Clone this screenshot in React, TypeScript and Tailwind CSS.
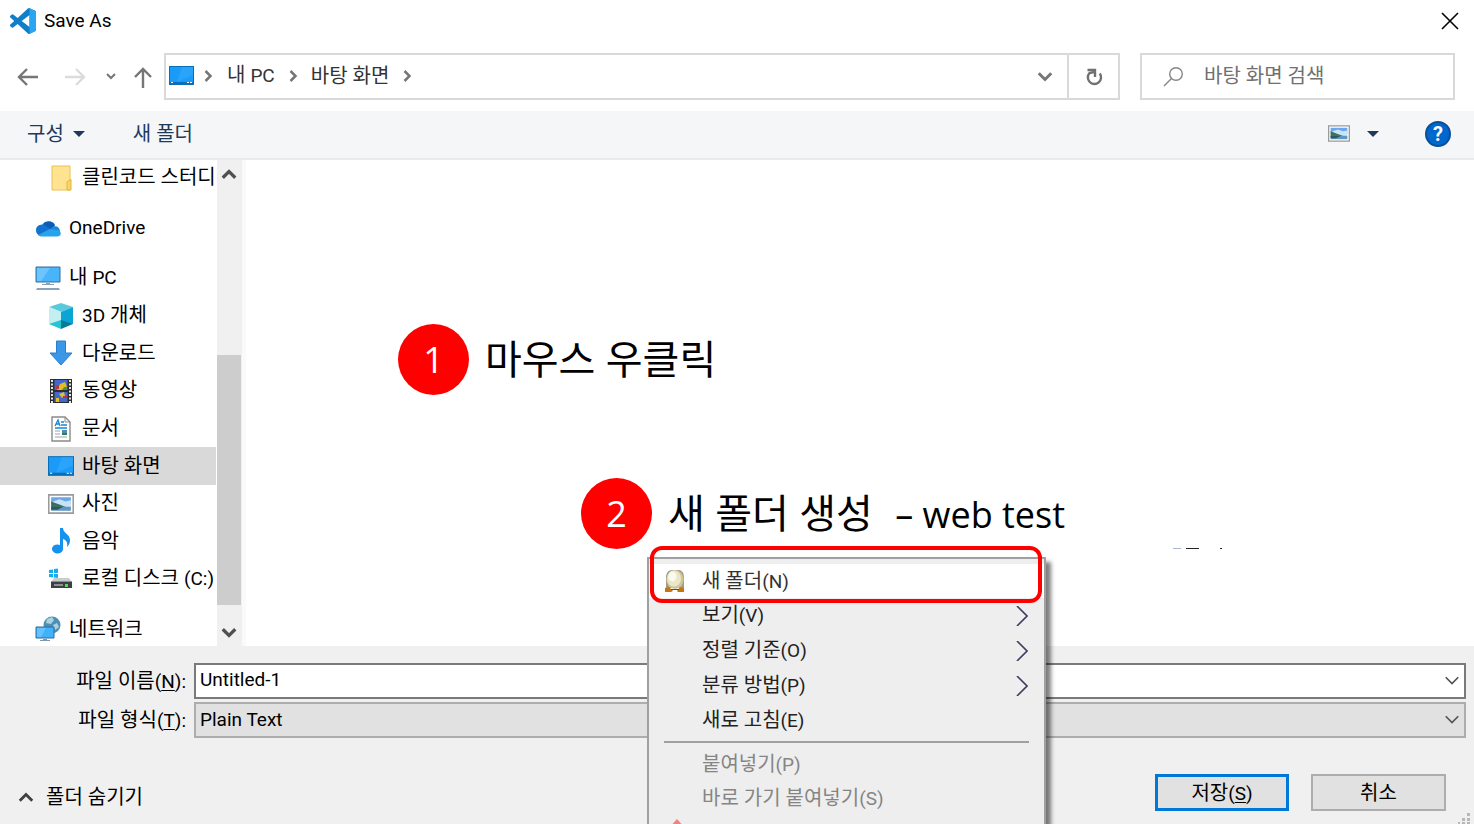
import React from 'react';

type IconProps = { className?: string };

/**
 * Renders a label. Latin runs are set one step smaller than Hangul so both
 * scripts look the same height.
 */
const Label: React.FC<{ text: string }> = ({ text }) => (
    <span className="whitespace-nowrap">
        {text.split(/([\x21-\x7e]+)/).map((part, i) =>
            i % 2 === 1 ? <span key={i} className="text-[19px]">{part}</span> : part
        )}
    </span>
);

const Chevron: React.FC<IconProps & { d?: string; width?: number }> = ({ className, d = 'M3 5l5 5 5-5', width = 2 }) => (
    <svg className={className} viewBox="0 0 16 16" fill="none" stroke="currentColor" strokeWidth={width}>
        <path d={d} />
    </svg>
);

const RIGHT = 'M6 4l4 4-4 4';
const UP = 'M3 11l5-5 5 5';

const VsCodeIcon: React.FC<IconProps> = ({ className }) => (
    <svg className={className} viewBox="0 0 24 24">
        <path fill="#0f7fc9" d="M23.15 2.587L18.21.21a1.494 1.494 0 0 0-1.705.29l-9.46 8.63-4.12-3.128a.999.999 0 0 0-1.276.057L.327 7.261A1 1 0 0 0 .326 8.74L3.899 12 .326 15.26a1 1 0 0 0 .001 1.479L1.65 17.94a.999.999 0 0 0 1.276.057l4.12-3.128 9.46 8.63a1.492 1.492 0 0 0 1.704.29l4.942-2.377A1.5 1.5 0 0 0 24 20.06V3.939a1.5 1.5 0 0 0-.85-1.352zm-5.146 14.861L10.826 12l7.178-5.448v10.896z" />
        <path fill="#29a5f2" d="M23.15 2.587L18.21.21a1.5 1.5 0 0 0-.9-.12c.4.1.7.5.7 1v21.8c0 .5-.3.9-.7 1 .3.06.6 0 .9-.1l4.942-2.377A1.5 1.5 0 0 0 24 20.06V3.939a1.5 1.5 0 0 0-.85-1.352z" />
    </svg>
);

const DesktopIcon: React.FC<IconProps> = ({ className }) => (
    <svg className={className} viewBox="0 0 25 19">
        <path fill="#0b6fb8" d="M0 0h25v19H0z" />
        <path fill="#1a9bf8" d="M1 1h23v15H1z" />
        <path fill="#35aafc" d="M13 1h11v8L8 16z" opacity=".6" />
        <path fill="#fff" d="M2 16h2v1H2zM18 16h2v1h-2zM21 16h2v1h-2z" />
    </svg>
);

const FolderIcon: React.FC<IconProps> = ({ className }) => (
    <svg className={className} viewBox="0 0 26 26">
        <path d="M4 1h18v24H4z" fill="#ffe391" stroke="#e8c252" />
        <path d="M20 16l3-1.500v10.500h-4v-8z" fill="#fbd468" stroke="#e0b63c" />
    </svg>
);

const CloudIcon: React.FC<IconProps> = ({ className }) => (
    <svg className={className} viewBox="0 0 26 26">
        <path fill="#0a5cb8" d="M7 11a7 6.500 0 0 1 13-1l-2 5-8 3z" />
        <path fill="#1173cf" d="M1 15a6 5.500 0 0 1 10-4l7 4-9 6H6a5.500 5.500 0 0 1-5-6z" />
        <path fill="#1a8ae0" d="M16 14c1-4 9-4 9 3l-3 3z" />
        <path fill="#29a4ea" d="M3 20l12-6 9 1.500c3 2 2 6-2 6H6a5 5 0 0 1-3-1.500z" />
    </svg>
);

const PcIcon: React.FC<IconProps> = ({ className }) => (
    <svg className={className} viewBox="0 0 26 26">
        <path d="M1 2h24v15H1z" fill="#48b5fb" stroke="#336f9c" />
        <path d="M2 3h13L6 16H2z" fill="#85d0ff" opacity=".6" />
        <path fill="#8ba3b8" d="M11 18h4v1h4v1H7v-1h4zM2 23h22l1 2H1z" />
    </svg>
);

const CubeIcon: React.FC<IconProps> = ({ className }) => (
    <svg className={className} viewBox="0 0 26 26">
        <path fill="#5ac9dc" d="M13 0l12 4-12 5L1 4z" />
        <path fill="#c4eff0" d="M1 4l12 5v12L1 21z" />
        <path fill="#0ba5d5" d="M25 4L13 9v12l12 0z" />
        <path fill="#26c3d4" d="M1 21l12-4v9z" />
        <path fill="#087c96" d="M25 21l-12-4v9z" />
    </svg>
);

const DownloadIcon: React.FC<IconProps> = ({ className }) => (
    <svg className={className} viewBox="0 0 26 26">
        <path d="M8.500 1h9v12H24L13 25 2 13h6.500z" fill="#3b97e8" stroke="#2b7fca" />
    </svg>
);

const VideoIcon: React.FC<IconProps> = ({ className }) => (
    <svg className={className} viewBox="0 0 26 26">
        <path fill="#2d2d2d" d="M2 1h22v24H2z" />
        <path fill="#4168cf" d="M6.500 2h13v10h-13zM6.500 14h13v10h-13z" />
        <path d="M4 2v23M22 2v23" stroke="#e8e8e8" strokeWidth="2" strokeDasharray="2 1.500" />
        <path fill="#e5bd22" d="M12 6l5-2 2 5-4 3H9zM11 16l5-2 1 4-3 2zM8 20h3v4H8z" />
        <path fill="#b43842" d="M8 7h3v4H8zM15 18h4v2h-4z" />
        <path fill="#3d9a4f" d="M16 9h3v3h-5z" />
    </svg>
);

const DocIcon: React.FC<IconProps> = ({ className }) => (
    <svg className={className} viewBox="0 0 26 26">
        <path d="M4 1h13l5 5v19H4z" fill="#fff" stroke="#8a8a8a" strokeWidth="1.400" />
        <path d="M17 1v5h5" fill="none" stroke="#8a8a8a" />
        <path d="M7 10l3-6 2 6M8 8h4M13 6h3M13 9h6M7 12h12" stroke="#1a86d4" strokeWidth="1.300" fill="none" />
        <path d="M7 15h5M7 18h5M7 21h12" stroke="#9aa4ad" />
        <path fill="#4a8db8" d="M14 14h5v3h-5z" />
        <path fill="#3b7a4a" d="M14 17h5v2h-5z" />
    </svg>
);

const PictureIcon: React.FC<IconProps> = ({ className }) => (
    <svg className={className} viewBox="0 0 25 19">
        <path d="M.75.75h23.500v17.500H.75z" fill="#fff" stroke="#9b9b9b" strokeWidth="1.500" />
        <path fill="#6aa6ee" d="M3 3h19v7H3z" />
        <path fill="#c7e4f7" d="M5 7l6-2 6 2 5-1v6H5z" />
        <path fill="#3e6f5a" d="M3 7l8 3 8 3H3z" />
        <path fill="#5f96c4" d="M3 12h19v4H3z" />
        <path fill="#2d5a58" d="M3 12h12l-6 3H3z" />
    </svg>
);

const MusicIcon: React.FC<IconProps> = ({ className }) => (
    <svg className={className} viewBox="0 0 26 26">
        <path fill="#1591ee" d="M12 0h3c0 5 7 6 7 12 0 3-1 5-3 7 1-5-1-7-4-8v10a5.500 4.500 0 1 1-3-4z" />
    </svg>
);

const DiskIcon: React.FC<IconProps> = ({ className }) => (
    <svg className={className} viewBox="0 0 26 26">
        <path fill="#14aef0" d="M1 4l4-.5V7H1zM6 3l4-.5V7H6zM1 8h4v3.500L1 11zM6 8h4v4l-4-.5z" />
        <path fill="#c9cccf" d="M6 12h15l3 4H3z" />
        <path fill="#3c4043" d="M3 15h21v7H3z" />
        <path fill="#8b9094" d="M3 15h21v1H3zM6 18h9v2H6z" />
        <path fill="#46e04e" d="M17 18h3v3h-3z" />
    </svg>
);

const NetworkIcon: React.FC<IconProps> = ({ className }) => (
    <svg className={className} viewBox="0 0 26 26">
        <circle cx="17" cy="9" r="8.500" fill="#4f8fb3" />
        <path fill="#a9d3e2" d="M12 3l5-2 2 3-3 4-5-1zM18 9l4-2 2 4-4 3z" />
        <path d="M1 11h18v11H1z" fill="#3fb2fb" stroke="#2c6d9e" />
        <path d="M2 12h9l-5 9H2z" fill="#80cdff" opacity=".6" />
        <path fill="#7f98ad" d="M8 23h4v1h3v1H5v-1h3z" />
    </svg>
);

const EggIcon: React.FC<IconProps> = ({ className }) => (
    <svg className={className} viewBox="0 0 22 24">
        <path fill="#a39c8c" d="M2 7q1-6 6-6h7q5 1 5 7v11H2z" />
        <path fill="#c8740f" d="M1 19l4-1 4 4-2 1H1zM13 22l3-4 4 1v4h-6z" />
        <path fill="#5d4d34" d="M7 20h8v1H7z" />
        <ellipse cx="11" cy="10.500" rx="8.500" ry="9.500" fill="#cfc79c" />
        <ellipse cx="10" cy="9.500" rx="7" ry="8" fill="#ebe6c6" />
        <ellipse cx="8.500" cy="7.500" rx="4" ry="5" fill="#fbfaf0" />
    </svg>
);

const places = [
    { text: '클린코드 스터디', Icon: FolderIcon, nested: true },
    null,
    { text: 'OneDrive', Icon: CloudIcon },
    null,
    { text: '내 PC', Icon: PcIcon },
    { text: '3D 개체', Icon: CubeIcon, nested: true },
    { text: '다운로드', Icon: DownloadIcon, nested: true },
    { text: '동영상', Icon: VideoIcon, nested: true },
    { text: '문서', Icon: DocIcon, nested: true },
    { text: '바탕 화면', Icon: DesktopIcon, nested: true, selected: true },
    { text: '사진', Icon: PictureIcon, nested: true },
    { text: '음악', Icon: MusicIcon, nested: true },
    { text: '로컬 디스크 (C:)', Icon: DiskIcon, nested: true },
    null,
    { text: '네트워크', Icon: NetworkIcon },
];

const menuItems = [
    { text: '보기(V)', submenu: true },
    { text: '정렬 기준(O)', submenu: true },
    { text: '분류 방법(P)', submenu: true },
    { text: '새로 고침(E)', submenu: false },
];

const AddressBar = () => (
    <div className="flex h-[47px] items-center pl-4 pr-[19px]">
        <button aria-label="뒤로" className="w-6 text-[#767676]">
            <svg className="size-6" viewBox="0 0 24 24" fill="none" stroke="currentColor" strokeWidth="2.400">
                <path d="M22 12H4M11 4l-8 8 8 8" />
            </svg>
        </button>
        <button aria-label="앞으로" className="ml-[23px] w-6 text-[#dcdcdc]">
            <svg className="size-6" viewBox="0 0 24 24" fill="none" stroke="currentColor" strokeWidth="2.400">
                <path d="M2 12h18M13 4l8 8-8 8" />
            </svg>
        </button>
        <button aria-label="최근 위치" className="ml-4 w-4 text-[#767676]">
            <Chevron className="size-4" d="M4 5l4 4 4-4" />
        </button>
        <button aria-label="위로" className="ml-3 w-6 text-[#767676]">
            <svg className="size-6" viewBox="0 0 24 24" fill="none" stroke="currentColor" strokeWidth="2.400">
                <path d="M12 23V4M4 12l8-8 8 8" />
            </svg>
        </button>
        <div className="ml-[9px] flex h-full flex-1 border-2 border-[#d9d9d9]">
            <nav className="flex flex-1 items-center pb-[2px] pl-[3px] text-[#333]">
                <DesktopIcon className="h-[19px] w-[25px]" />
                <Chevron className="ml-1 size-5 text-[#767676]" d={RIGHT} />
                <a href="#pc" className="ml-[9px]"><Label text="내 PC" /></a>
                <Chevron className="mx-2 size-5 text-[#767676]" d={RIGHT} />
                <a href="#desktop"><Label text="바탕 화면" /></a>
                <Chevron className="ml-2 size-5 text-[#767676]" d={RIGHT} />
            </nav>
            <button aria-label="이전 위치" className="w-12 pl-4 text-[#767676]">
                <Chevron className="size-5" width={2.4} />
            </button>
            <button aria-label="새로 고침" className="flex w-[51px] items-center justify-center border-l-2 border-[#d9d9d9] text-[#707070]">
                <svg className="size-5" viewBox="0 0 20 20" fill="none" stroke="currentColor" strokeWidth="2.400">
                    <path d="M15.800 6.500A6.600 6.600 0 1 1 5.500 6L10 5" />
                    <path d="M3.500 3H11v7" />
                </svg>
            </button>
        </div>
        <label className="ml-5 flex h-full w-[315px] items-center border-2 border-[#d9d9d9] pl-5">
            <svg className="size-6 text-[#868686]" viewBox="0 0 24 24" fill="none" stroke="currentColor" strokeWidth="1.400">
                <circle cx="14" cy="9" r="6.300" />
                <path d="M9.500 13.500L2 21" />
            </svg>
            <input
                aria-label="검색"
                placeholder="바탕 화면 검색"
                className="ml-[18px] w-0 flex-1 pb-[2px] outline-none placeholder:text-[#707070]"
            />
        </label>
    </div>
);

const Toolbar = () => (
    <div className="mt-[11px] flex h-[49px] items-center border-b-2 border-[#e8eaec] bg-[#f4f6f8] pb-[2px] pl-[27px] pr-[23px] text-[#1e395b]">
        <button className="flex items-center">
            구성
            <svg className="ml-[9px] h-2 w-3" viewBox="0 0 12 8"><path fill="currentColor" d="M0 1h12L6 7z" /></svg>
        </button>
        <button className="ml-12">새 폴더</button>
        <button aria-label="보기 변경" className="ml-auto flex items-center">
            <PictureIcon className="h-[17px] w-[22px]" />
            <svg className="ml-[17px] h-2 w-3" viewBox="0 0 12 8"><path fill="currentColor" d="M0 1h12L6 7z" /></svg>
        </button>
        <button aria-label="도움말" className="ml-[46px] flex size-[26px] items-center justify-center rounded-full border-2 border-[#0a4f96] bg-[#0067cf] text-[20px] font-bold leading-none text-white">
            ?
        </button>
    </div>
);

const Sidebar = () => (
    <aside className="flex w-[246px] shrink-0 overflow-hidden border-r-4 border-[#fafafa] bg-white">
        <ul className="-mb-[2px] -mt-px flex w-[216px] flex-col overflow-hidden">
            {places.map((place, i) =>
                place ? (
                    <li key={i} className="flex min-h-0 grow-3 basis-0">
                        <a
                            href="#place"
                            className={`flex w-full items-center gap-2 ${place.nested ? 'pl-12' : 'pl-[35px]'} ${place.selected ? 'bg-[#d9d9d9]' : ''}`}
                        >
                            <place.Icon className="h-[26px] w-[26px] shrink-0" />
                            <span className="pb-px"><Label text={place.text} /></span>
                        </a>
                    </li>
                ) : (
                    <li key={i} aria-hidden className="grow basis-0" />
                )
            )}
        </ul>
        <div className="ml-px flex w-[25px] flex-col items-center bg-[#f0f0f0] pr-px text-[#505050]">
            <button aria-label="위로 스크롤" className="py-1"><Chevron className="size-5" d={UP} width={2.6} /></button>
            <div className="mt-auto h-[250px] w-6 bg-[#cdcdcd]" />
            <button aria-label="아래로 스크롤" className="pb-[3px] pt-[18px]"><Chevron className="size-5" width={2.6} /></button>
        </div>
    </aside>
);

const Footer = () => (
    <footer className="relative bg-[#f0f0f0] pb-[13px] pl-6 pr-2 pt-[17px]">
        <div className="grid grid-cols-[162px_1fr] items-center gap-x-2 gap-y-[3px]">
            <label htmlFor="file-name" className="text-right">
                파일 이름<span className="text-[19px]">(<u className="underline-offset-2">N</u>):</span>
            </label>
            <div className="flex h-9 items-center border-2 border-[#7a7a7a] bg-white">
                <input id="file-name" defaultValue="Untitled-1" className="h-full min-w-0 flex-1 pb-1 pl-1 text-[19px] outline-none" />
                <button aria-label="파일 이름 목록" className="pr-[2px] text-[#555]"><Chevron className="size-5" width={1.4} /></button>
            </div>
            <label htmlFor="file-type" className="text-right">
                파일 형식<span className="text-[19px]">(<u className="underline-offset-2">T</u>):</span>
            </label>
            <div className="relative">
                <select id="file-type" className="block h-9 w-full appearance-none border-2 border-[#adadad] bg-[#e1e1e1] pl-1 text-[19px] leading-7">
                    <option>Plain Text</option>
                </select>
                <Chevron className="pointer-events-none absolute right-1 top-2 size-5 text-[#555]" width={1.4} />
            </div>
        </div>
        <div className="mt-9 flex items-center pr-5">
            <button className="-ml-2 mt-2 flex items-center gap-[10px]">
                <Chevron className="size-5 text-[#404040]" d={UP} width={2.2} />
                폴더 숨기기
            </button>
            <button className="ml-auto h-[37px] w-[134px] border-[3px] border-[#0078d7] bg-[#e1e1e1] leading-none">
                저장<span className="text-[19px]">(<u className="underline-offset-2">S</u>)</span>
            </button>
            <button className="ml-[22px] h-[37px] w-[135px] border-2 border-[#adadad] bg-[#e1e1e1] leading-none">취소</button>
        </div>
        <svg className="absolute bottom-0 right-1 size-3" viewBox="0 0 12 12" fill="#b8b8b8">
            <path d="M9 1h3v3H9zM4 6h3v3H4zM9 6h3v3H9zM0 10h2v2H0zM4 10h3v2H4zM9 10h3v2H9z" />
        </svg>
    </footer>
);

const ContextMenu = () => (
    <div className="absolute left-[647px] top-[557px] w-[399px] border-2 border-[#a0a0a0] bg-[#eeeeee] pt-[5px] shadow-[5px_5px_4px_rgba(0,0,0,0.5)]">
        <button className="flex h-[34px] w-full items-center bg-white pl-[15px]">
            <EggIcon className="h-6 w-[22px]" />
            <span className="ml-4 text-[#333]"><Label text="새 폴더(N)" /></span>
        </button>
        {menuItems.map((item) => (
            <button key={item.text} className="flex h-[35px] w-full items-center justify-between pl-[53px] pr-4 text-[#222]">
                <Label text={item.text} />
                {item.submenu && (
                    <svg className="h-5 w-3 text-[#3d3d63]" viewBox="0 0 12 20" fill="none" stroke="currentColor" strokeWidth="1.600">
                        <path d="M1 0l10 10L1 20" />
                    </svg>
                )}
            </button>
        ))}
        <hr className="mx-[15px] mb-1 mt-[3px] border-t-2 border-[#a0a0a0]" />
        <button disabled className="flex h-[34px] w-full items-center pl-[53px] text-[#858585]"><Label text="붙여넣기(P)" /></button>
        <button disabled className="flex h-[34px] w-full items-center pl-[53px] text-[#858585]"><Label text="바로 가기 붙여넣기(S)" /></button>
        <svg className="ml-5 mt-1 h-6 w-4" viewBox="0 0 16 24">
            <path fill="#f38080" d="M8 0l8 9H0z" />
        </svg>
        <div className="absolute -top-[13px] left-px h-[57px] w-[392px] rounded-xl border-4 border-[#ff0000]" />
    </div>
);

const Step: React.FC<{ n: number; className: string; children: React.ReactNode }> = ({ n, className, children }) => (
    <div className={`absolute flex items-center whitespace-nowrap font-['Open_Sans','Noto_Sans_CJK_KR',sans-serif] text-[40px] leading-none text-black ${className}`}>
        <span className="flex size-[71px] items-center justify-center rounded-full bg-[#ff0000] text-[36px] text-white">{n}</span>
        <span className="ml-4 pb-[2px]">{children}</span>
    </div>
);

export default function App() {
    return (
        <div className="relative flex h-screen min-h-[700px] flex-col overflow-hidden bg-white font-['Roboto','Noto_Sans_CJK_KR',sans-serif] text-[20px] leading-7 text-black">
            <header className="flex h-[42px] shrink-0 items-center pl-[10px] pr-[14px]">
                <VsCodeIcon className="size-[26px]" />
                <h1 className="ml-2 text-[19px]">Save As</h1>
                <button aria-label="닫기" className="ml-auto">
                    <svg className="size-5" viewBox="0 0 20 20" fill="none" stroke="#000" strokeWidth="1.600">
                        <path d="M2 2l16 16M18 2L2 18" />
                    </svg>
                </button>
            </header>
            <div className="mt-[11px] shrink-0">
                <AddressBar />
                <Toolbar />
            </div>
            <main className="flex min-h-0 flex-1">
                <Sidebar />
            </main>
            <Footer />

            <svg className="absolute left-[1172px] top-[548px] h-[2px] w-[54px]" viewBox="0 0 54 2">
                <path fill="#a9b4cf" d="M1 0h8v1H1z" />
                <path fill="#222" d="M14 0h13v1H14zM48 0h2v1h-2z" />
            </svg>
            <ContextMenu />
            <Step n={1} className="left-[398px] top-[324px]">마우스 우클릭</Step>
            <Step n={2} className="left-[581px] top-[478px]">
                새 폴더 생성 <span className="ml-3 text-[36px]">– web test</span>
            </Step>
        </div>
    );
}
